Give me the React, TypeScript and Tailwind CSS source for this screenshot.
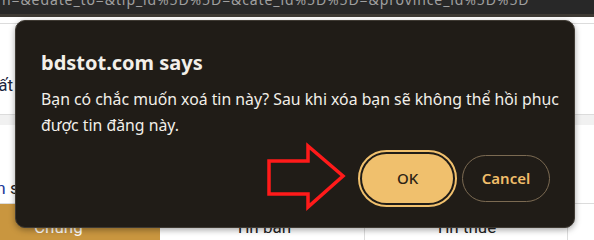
import React from "react";

export default function App() {
  return (
    <div className="relative w-[594px] h-[240px] overflow-hidden bg-white" style={{ fontFamily: "'Noto Sans', 'Open Sans', sans-serif" }}>
      {/* background page */}
      <div className="flex flex-col h-full">
        <div className="h-[15px] bg-[#282828] overflow-hidden">
          <div className="-mt-[9px] pl-[2px] text-[14px] leading-[18px] text-[#a0a0a0] whitespace-nowrap tracking-[0.9px]">
            n=&amp;edate_to=&amp;tip_id%5D%5D=&amp;cate_id%5D%5D=&amp;province_id%5D%5D
          </div>
        </div>
        <div className="h-[3px] bg-[#3e3a34]" />
        <div className="h-[6px]" />
        <div className="h-[97px] border-t border-[#dcdcdc] flex items-center">
          <span className="text-[17px] text-[#1c2540] -ml-[11px] mt-[34px]" style={{ fontFamily: "Roboto, sans-serif" }}>Tất</span>
        </div>
        <div className="h-[12px] border-t border-[#dcdcdc] bg-[#f1f1f1]" />
        <div className="h-[82px] flex items-center">
          <span className="text-[17px] -ml-[18px] mt-[50px]" style={{ fontFamily: "Roboto, sans-serif" }}>
            <span className="text-[#1d3a9a]">Tin</span> <span className="text-[#222]">s</span>
          </span>
        </div>
        <div className="flex-1 border-t border-[#dcdcdc] flex text-[17px]" style={{ fontFamily: "Roboto, sans-serif" }}>
          <div className="w-[160px] bg-[#c9963f] text-white pl-[34px] pt-[11px]">Chung</div>
          <div className="w-[205px] border-r border-[#dcdcdc] text-[#222] pl-[75px] pt-[11px]">Tin bán</div>
          <div className="w-[203px] border-r border-[#dcdcdc] text-[#222] pl-[70px] pt-[11px]">Tin thuê</div>
          <div className="flex-1" />
        </div>
      </div>

      {/* dialog */}
      <div className="absolute left-[15px] top-[20px] w-[560px] h-[208px] rounded-[10px] bg-[#201c17] border border-[#3f3a33] shadow-[0_2px_6px_rgba(0,0,0,0.35)] flex flex-col pl-[25px] pr-[4px]" style={{ fontFamily: "'Noto Sans', 'Open Sans', sans-serif" }}>
        <div className="mt-[30px] text-[20px] leading-[24px] font-bold text-[#f2efe9]">bdstot.com says</div>
        <div className="mt-[11px] text-[15.8px] leading-[26px] text-[#f2efe9]">
          Bạn có chắc muốn xoá tin này? Sau khi xóa bạn sẽ không thể hồi phục được tin đăng này.
        </div>
        <div className="mt-auto mb-[24px] mr-[20px] flex justify-end items-center gap-[9px]">
          <button className="w-[91px] h-[49px] rounded-full bg-[#f0c06d] text-[#2e2415] text-[15px] font-medium outline-2 outline-offset-2 outline-[#f0c06d]">
            OK
          </button>
          <button className="w-[88px] h-[47px] rounded-full border border-[#7b6a52] text-[#f0be6a] text-[15px] font-semibold">
            Cancel
          </button>
        </div>
      </div>

      {/* red arrow annotation */}
      <svg className="absolute left-[262px] top-[140px]" width="90" height="75" viewBox="0 0 90 75">
        <polygon points="7,21 46,21 46,6 81,36 46,67 46,54 7,54" fill="none" stroke="#ff1a1a" strokeWidth="3.5" strokeLinejoin="miter" />
      </svg>
    </div>
  );
}
